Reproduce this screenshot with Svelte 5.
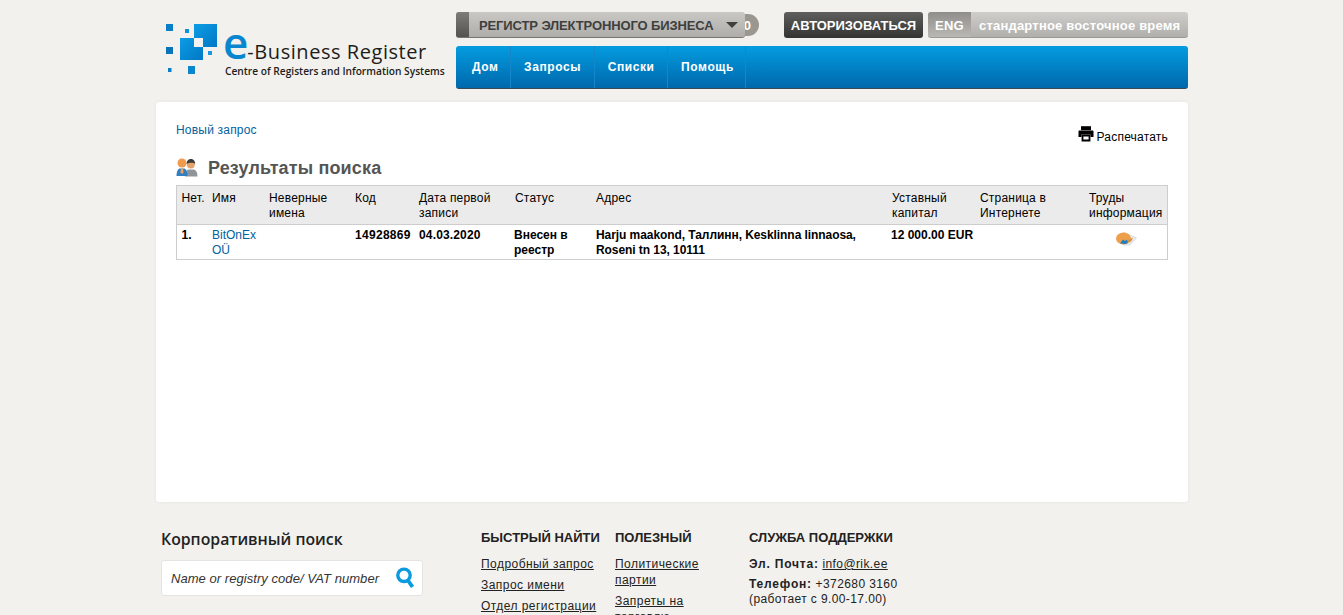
<script>
  /* ---------------------------------------------------------------------------------------------
   *  e-Business Register search results page
   *-------------------------------------------------------------------------------------------- */

  const navItems = ['Дом', 'Запросы', 'Списки', 'Помощь']

  const columns = [
    { label: 'Нет.', width: 31 },
    { label: 'Имя', width: 57 },
    { label: 'Неверные имена', width: 86 },
    { label: 'Код', width: 64 },
    { label: 'Дата первой записи', width: 96 },
    { label: 'Статус', width: 81 },
    { label: 'Адрес', width: 296 },
    { label: 'Уставный капитал', width: 88 },
    { label: 'Страница в Интернете', width: 109 },
    { label: 'Труды информация', width: 83 }
  ]

  const quickLinks = ['Подробный запрос', 'Запрос имени', 'Отдел регистрации']
  const usefulLinks = ['Политические партии', 'Запреты на торговлю']
</script>

<div class="page">
  <div class="wrap">
    <header class="header">
      <a class="logo" href="#top">
        <svg class="logo-mark" width="60" height="52" viewBox="0 0 60 52">
          <defs>
            <linearGradient id="sq" x1="0" y1="0" x2="1" y2="1">
              <stop offset="0" stop-color="#0d9ce6" />
              <stop offset="1" stop-color="#0078c4" />
            </linearGradient>
          </defs>
          <rect x="28" y="0" width="23" height="23" fill="url(#sq)" />
          <rect x="14" y="14" width="23" height="22" fill="url(#sq)" />
          <rect x="28" y="14" width="9" height="9" fill="#f4f3ef" />
          <rect x="0" y="0" width="7" height="7" fill="#0a7fc8" />
          <rect x="19" y="5" width="4" height="4" fill="#0f90dc" />
          <rect x="0" y="23" width="7" height="7" fill="#0a74ba" />
          <rect x="42" y="27" width="4" height="4" fill="#1a97e0" />
          <rect x="2" y="44" width="3.500" height="4" fill="#0a7fc8" />
          <rect x="22" y="42" width="7" height="8" fill="#0a86d0" />
        </svg>
        <span class="logo-text">
          <span class="logo-title"><span class="logo-e">e</span>-Business Register</span>
          <span class="logo-sub">Centre of Registers and Information Systems</span>
        </span>
      </a>

      <div class="header-right">
        <div class="top-bar">
          <div class="register">
            <div class="register-box">
              <span class="grip"></span>
              <span class="register-label">РЕГИСТР ЭЛЕКТРОННОГО БИЗНЕСА</span>
              <span class="caret"></span>
            </div>
            <span class="counter">0</span>
          </div>
          <a class="login" href="#top">АВТОРИЗОВАТЬСЯ</a>
          <div class="lang">
            <span class="lang-code">ENG</span>
            <span class="lang-time">стандартное восточное время</span>
          </div>
        </div>
        <nav class="nav">
          {#each navItems as item}
            <a class="nav-item" href="#top">{item}</a>
          {/each}
        </nav>
      </div>
    </header>

    <main class="card">
      <div class="card-top">
        <a class="link" href="#top">Новый запрос</a>
        <a class="print" href="#top">
          <svg width="16" height="17" viewBox="0 0 16 17">
            <path d="M3 1.200h10v4H3z" fill="#000" />
            <path d="M1.500 5.500h13c.6 0 1 .4 1 1v5.500h-3v-2.500h-9V12h-3V6.500c0-.6.4-1 1-1z" fill="#000" />
            <path d="M4.500 10.500h7v5h-7z" fill="#fff" stroke="#000" stroke-width="1.800" />
          </svg>
          <span>Распечатать</span>
        </a>
      </div>

      <div class="title-row">
        <svg class="title-icon" width="22" height="20" viewBox="0 0 22 20">
          <path d="M9 19.500c0-3.500 1-6 3-7h6c2.500 1 3.500 3.500 3.500 7z" fill="#8f969b" />
          <circle cx="14.800" cy="7.500" r="4" fill="#e3a46c" />
          <path d="M10.600 7c0-3.500 2-5 4.300-5s4.300 1.500 4.200 5c-1.200-1.800-6-1.800-8.500 0z" fill="#3b3b3b" />
          <path d="M0.500 19c0-3.500.8-6.500 3-7.500h5c2 1 3 3.500 3 7.500z" fill="#2f7fc1" />
          <circle cx="6" cy="6" r="4.500" fill="#ef9a4c" />
          <path d="M5 11.500h2l.6 4-1.600 1.500-1.600-1.500z" fill="#f0a05a" />
        </svg>
        <h1 class="title">Результаты поиска</h1>
      </div>

      <table class="results">
        <colgroup>
          {#each columns as col}
            <col style="width: {col.width}px" />
          {/each}
        </colgroup>
        <thead>
          <tr>
            {#each columns as col}
              <th>{col.label}</th>
            {/each}
          </tr>
        </thead>
        <tbody>
          <tr>
            <td><b>1.</b></td>
            <td><a class="name" href="#top">BitOnEx OÜ</a></td>
            <td></td>
            <td><b class="num">14928869</b></td>
            <td><b class="date">04.03.2020</b></td>
            <td class="status"><b>Внесен в реестр</b></td>
            <td><b class="addr">Harju maakond, Таллинн, Kesklinna linnaosa, Roseni tn 13, 10111</b></td>
            <td class="capital"><b>12 000.00 EUR</b></td>
            <td></td>
            <td>
              <svg class="info-icon" width="22" height="15" viewBox="0 0 22 14">
                <path d="M9 1l12.500 5.500-6.500 7H8z" fill="#e9ecef" stroke="#c9ccd0" stroke-width="0.600" />
                <ellipse cx="8.500" cy="7" rx="7.500" ry="6" fill="#ee9f4a" />
                <path d="M5 12l3-4 2 1.500 2-1.500 1 3-2 1.500z" fill="#1f7fc2" />
                <path d="M13 9l5-3-1.500 3.500-2.500 1.500z" fill="#d98c3c" />
              </svg>
            </td>
          </tr>
        </tbody>
      </table>
    </main>

    <footer class="footer">
      <section class="search-col">
        <h2 class="search-title">Корпоративный поиск</h2>
        <div class="search-box">
          <span class="search-hint">Name or registry code/ VAT number</span>
          <svg width="18" height="22" viewBox="0 0 18 22">
            <circle cx="8" cy="8.300" r="6.200" fill="none" stroke="#0a9ade" stroke-width="3.400" />
            <path d="M12 13.500l4.500 6.500" stroke="#0a9ade" stroke-width="3.800" />
          </svg>
        </div>
      </section>

      <section class="links-col quick">
        <h3>БЫСТРЫЙ НАЙТИ</h3>
        {#each quickLinks as item}
          <a href="#top">{item}</a>
        {/each}
      </section>

      <section class="links-col useful">
        <h3>ПОЛЕЗНЫЙ</h3>
        {#each usefulLinks as item}
          <a href="#top">{item}</a>
        {/each}
      </section>

      <section class="links-col support">
        <h3>СЛУЖБА ПОДДЕРЖКИ</h3>
        <p class="mail"><b>Эл. Почта:</b> <a href="#top">info@rik.ee</a></p>
        <p><b>Телефон:</b> +372680 3160<br />(работает с 9.00-17.00)</p>
      </section>
    </footer>
  </div>
</div>

<style>
  :global(body) {
    margin: 0;
    background: #f2f1ed;
    font-family: 'Liberation Sans', Arial, sans-serif;
    font-size: 12px;
    color: #000;
  }

  .page {
    height: 615px;
    overflow: hidden;
  }

  .wrap {
    width: 1032px;
    margin-left: 156px;
  }

  a {
    text-decoration: none;
  }

  /* header */
  .header {
    display: flex;
    height: 102px;
    box-sizing: border-box;
    padding-top: 12px;
  }

  .logo {
    display: flex;
    width: 300px;
    padding: 12px 0 0 10px;
    box-sizing: border-box;
    color: #1d1d1b;
  }

  .logo-mark {
    flex: none;
  }

  .logo-text {
    display: flex;
    flex-direction: column;
    margin-left: -1px;
    white-space: nowrap;
  }

  .logo-title {
    font-family: 'Open Sans', sans-serif;
    font-size: 20px;
    line-height: 34px;
    height: 34px;
    margin-top: 1px;
    letter-spacing: 0.55px;
  }

  .logo-e {
    margin-left: -2px;
    font-size: 44px;
    font-weight: 600;
    line-height: 34px;
    color: #0a86d0;
    letter-spacing: -1px;
  }

  .logo-sub {
    font-family: 'Open Sans', sans-serif;
    font-weight: 600;
    font-size: 10.200px;
    line-height: 12px;
    margin-top: 6px;
  }

  .header-right {
    flex: 1;
  }

  .top-bar {
    display: flex;
    height: 26px;
  }

  .register {
    display: flex;
    width: 328px;
  }

  .register-box {
    display: flex;
    align-items: center;
    width: 289px;
    height: 26px;
    box-sizing: border-box;
    border-bottom: 1px solid #77766f;
    border-radius: 3px;
    background: linear-gradient(#c9c8c5, #aeadaa);
    position: relative;
    z-index: 1;
    overflow: hidden;
  }

  .grip {
    flex: none;
    width: 13px;
    height: 100%;
    background: linear-gradient(#7d7c79, #55534f);
  }

  .register-label {
    margin-left: 10px;
    padding-top: 1px;
    font-size: 13px;
    font-weight: bold;
    letter-spacing: -0.120px;
    color: #3f3f3d;
    white-space: nowrap;
  }

  .caret {
    flex: none;
    margin-left: 12px;
    border-left: 6px solid transparent;
    border-right: 6px solid transparent;
    border-top: 6px solid #3f3f3d;
  }

  .counter {
    width: 24px;
    height: 22px;
    margin: 2px 0 0 -10px;
    padding-right: 8px;
    box-sizing: border-box;
    border-radius: 0 11px 11px 0;
    background: #99978f;
    color: #fff;
    font-size: 13px;
    font-weight: bold;
    line-height: 24px;
    text-align: right;
  }

  .login {
    width: 139px;
    height: 26px;
    box-sizing: border-box;
    border-radius: 3px;
    background: linear-gradient(#5f5f5d, #333331);
    color: #fff;
    font-size: 13px;
    font-weight: bold;
    line-height: 28px;
    text-align: center;
    white-space: nowrap;
  }

  .lang {
    display: flex;
    width: 260px;
    height: 26px;
    margin-left: 5px;
    box-sizing: border-box;
    border-bottom: 1px solid #9a9a97;
    border-radius: 3px;
    background: linear-gradient(#cfcecb, #b0afac);
    color: #fff;
    overflow: hidden;
    font-weight: bold;
    line-height: 28px;
    white-space: nowrap;
  }

  .lang-code {
    width: 43px;
    font-size: 13px;
    letter-spacing: 0.2px;
    text-align: center;
    background: linear-gradient(#8f8e8b, #b9b8b5);
  }

  .lang-time {
    margin-left: 8px;
    font-size: 13px;
    letter-spacing: 0.2px;
  }

  .nav {
    display: flex;
    height: 43px;
    margin-top: 8px;
    box-sizing: border-box;
    border-bottom: 1px solid #3a4a55;
    border-radius: 3px;
    background: linear-gradient(#049ce0, #0068ac);
  }

  .nav-item {
    padding: 0 12.500px 0 13px;
    border-right: 1px solid #1486c9;
    color: #fff;
    font-size: 12px;
    font-weight: bold;
    letter-spacing: 0.6px;
    line-height: 42px;
  }

  .nav-item:first-child {
    padding: 0 11.500px 0 16px;
  }

  .nav-item:last-child {
    padding-right: 11px;
  }

  /* main card */
  .card {
    height: 400px;
    box-sizing: border-box;
    padding: 21px 20px 0;
    border-radius: 3px;
    background: #fff;
    box-shadow: 0 0 4px rgba(0, 0, 0, 0.06);
  }

  .card-top {
    display: flex;
    justify-content: space-between;
    height: 28px;
  }

  .link {
    color: #00629f;
    letter-spacing: 0.2px;
  }

  .print {
    display: flex;
    align-items: flex-end;
    gap: 3px;
    height: 21px;
    color: #000;
    line-height: 14px;
    letter-spacing: 0.2px;
  }

  .print svg {
    margin-bottom: 2px;
  }

  .title-row {
    display: flex;
    align-items: center;
    height: 34px;
  }

  .title-icon {
    margin: 0 10px 2px 0;
  }

  .title {
    margin: 0;
    color: #555;
    font-size: 18px;
    font-weight: bold;
    letter-spacing: 0.15px;
  }

  .results {
    width: 992px;
    table-layout: fixed;
    border-collapse: collapse;
    border: 1px solid #cdcdcd;
    line-height: 15px;
  }

  .results th {
    height: 38px;
    padding: 5px 4px 3px 4.500px;
    box-sizing: border-box;
    border-bottom: 1px solid #cdcdcd;
    background: #ebebeb;
    font-weight: normal;
    letter-spacing: 0.2px;
    text-align: left;
    vertical-align: top;
  }

  .results td {
    height: 34px;
    padding: 3px 0 1px 4.500px;
    box-sizing: border-box;
    vertical-align: top;
  }

  .name {
    color: #00629f;
  }

  .num {
    letter-spacing: 0.3px;
  }

  .date {
    letter-spacing: 0.15px;
  }

  .addr {
    letter-spacing: -0.07px;
  }

  .results td.status {
    padding-left: 3.500px;
    padding-right: 6px;
  }

  .results td.capital {
    padding-left: 3.500px;
    white-space: nowrap;
  }

  .info-icon {
    display: block;
    margin: 3px auto 0;
    position: relative;
    left: -2px;
  }

  /* footer */
  .footer {
    display: flex;
    padding-top: 28px;
    color: #222;
  }

  .search-col {
    width: 320px;
    margin-left: 5px;
  }

  .search-title {
    margin: 0 0 11px;
    font-family: 'Open Sans', sans-serif;
    font-size: 15.800px;
    font-weight: 600;
    line-height: 19px;
  }

  .search-box {
    display: flex;
    align-items: center;
    justify-content: space-between;
    width: 262px;
    height: 36px;
    padding: 0 8px 0 9px;
    box-sizing: border-box;
    border: 1px solid #e4e4e2;
    border-radius: 3px;
    background: #fff;
  }

  .search-hint {
    font-style: italic;
    font-size: 13px;
    letter-spacing: 0.05px;
    color: #333;
    white-space: nowrap;
  }

  .links-col {
    line-height: 15px;
    letter-spacing: 0.45px;
  }

  .links-col h3 {
    margin: -1px 0 11px;
    font-size: 13px;
    line-height: 17px;
    font-weight: bold;
    letter-spacing: 0;
    white-space: nowrap;
    color: #222;
  }

  .links-col a {
    color: #222;
    text-decoration: underline;
  }

  .quick,
  .useful {
    display: flex;
    flex-direction: column;
    align-items: flex-start;
    width: 134px;
    gap: 6px;
  }

  .quick h3 {
    margin-bottom: 5px;
  }

  .useful {
    gap: 5px;
  }

  .useful h3 {
    margin-bottom: 5px;
  }

  .useful a {
    width: 100px;
    line-height: 16px;
  }

  .support p {
    margin: 0;
    line-height: 15px;
    letter-spacing: 0.4px;
  }

  .support b {
    letter-spacing: 0.8px;
  }

  .support .mail {
    margin-bottom: 5px;
  }
</style>
